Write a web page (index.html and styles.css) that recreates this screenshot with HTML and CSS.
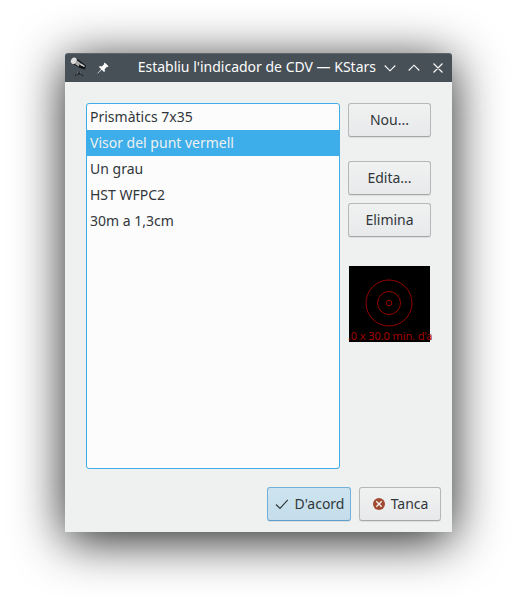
FILE: index.html
```html
<!DOCTYPE html>
<html lang="ca">
<head>
<meta charset="utf-8">
<title>Establiu l'indicador de CDV — KStars</title>
<link rel="stylesheet" href="styles.css">
</head>
<body>
<main class="window">
  <header class="titlebar">
    <svg class="app-icon" width="18" height="20" viewBox="0 0 18 20">
      <path d="M9 13.500 L5.500 18.800 M9 13.500 L12.800 18.800 M6.500 17 H12" stroke="#20262a" stroke-width="1.300" fill="none"/>
      <path d="M8.500 13.500 L6.500 17.500 M9.600 13.500 L11.600 17.500" stroke="#8b9196" stroke-width=".7" fill="none"/>
      <path d="M3.500 1.200 L8 2.500 L16 8.500 L15 12.500 L10 11 L2.500 6.800 Z" fill="#101214"/>
      <path d="M7 3.500 L10.500 6 L8.500 9.500 L5 7 Z" fill="#a9a9a9"/>
      <path d="M10.500 6 L15 9 L14.300 10 L10 8 Z" fill="#cfcfcf"/>
      <ellipse cx="3.800" cy="3.800" rx="2.800" ry="3.400" transform="rotate(28 3.800 3.800)" fill="#dedede"/>
    </svg>
    <svg class="pin" width="12" height="12" viewBox="0 0 12 12">
      <path d="M7.700 .4 L11.600 4.300 L10.600 5 L10 4.700 L7.600 7.200 L8 9.200 L7 10 L4.800 7.800 L.7 11.600 L.4 11.300 L4.200 7.200 L2 5 L2.800 4 L4.800 4.400 L7.300 2 L7 1.300 Z" fill="#fcfcfc"/>
    </svg>
    <h1 class="title">Establiu l'indicador de CDV — KStars</h1>
    <svg class="controls" width="60" height="12" viewBox="0 0 60 12" fill="none" stroke="#fcfcfc" stroke-width="1.100">
      <path d="M.7 3.500 L6 8.800 L11.300 3.500 M24.700 8.500 L30 3.200 L35.300 8.500 M49.500 1.500 L58.500 10.500 M58.500 1.500 L49.500 10.500"/>
    </svg>
  </header>
  <div class="content">
    <ul class="list">
      <li>Prismàtics 7x35</li>
      <li class="selected">Visor del punt vermell</li>
      <li>Un grau</li>
      <li>HST WFPC2</li>
      <li>30m a 1,3cm</li>
    </ul>
    <div class="side">
      <button class="button new">Nou...</button>
      <button class="button">Edita...</button>
      <button class="button">Elimina</button>
      <div class="preview">
        <svg width="83" height="76" viewBox="0 0 83 76">
          <rect x="1" width="81" height="76" fill="#000"/>
          <g fill="none" stroke="#980000">
            <circle cx="41" cy="37" r="23"/>
            <circle cx="41" cy="37" r="11.500"/>
            <circle cx="41" cy="37" r="2.800"/>
          </g>
        </svg>
        <span class="caption">.0 x 30.0 min. d'a</span>
      </div>
    </div>
  </div>
  <footer class="actions">
    <button class="button ok">
      <svg width="14" height="12" viewBox="0 0 14 12"><path d="M1 6.500 L5 10.400 L12.800 1.800" fill="none" stroke="#31363b" stroke-width="1.100"/></svg>
      <span>D'acord</span>
    </button>
    <button class="button close">
      <svg width="12" height="12" viewBox="0 0 12 12"><circle cx="6" cy="6" r="6" fill="#a04a32"/><path d="M3.300 3.300 L8.700 8.700 M8.700 3.300 L3.300 8.700" stroke="#f4efed" stroke-width="1.400"/></svg>
      <span>Tanca</span>
    </button>
  </footer>
</main>
</body>
</html>
```
FILE: styles.css
```css
* { box-sizing: border-box; }
body {
  margin: 0;
  padding: 53px 65px 0;
  height: 609px;
  overflow: hidden;
  background: #fff;
  font: 14px/20px "Noto Sans", sans-serif;
  color: #31363b;
}
.window {
  width: 387px;
  height: 479px;
  background: #eff0f0;
  border-radius: 3px 3px 0 0;
  box-shadow: 0 8px 50px rgba(0, 0, 0, .88);
}
.titlebar {
  display: flex;
  align-items: center;
  height: 29px;
  padding: 0 8px 1px 5px;
  background: #475057;
  border-top: 1px solid #5d666d;
  border-radius: 3px 3px 0 0;
  color: #fcfcfc;
}
.app-icon { margin-top: -1px; }
.pin { margin-left: 9px; }
.title {
  margin: -1px 8px 0 auto;
  font-size: 14px;
  font-weight: 400;
  white-space: nowrap;
}
.content {
  display: flex;
  gap: 8px;
  padding: 21px 21px 0;
}
.list {
  width: 254px;
  height: 366px;
  margin: 0;
  padding: 0;
  list-style: none;
  background: #fcfcfc;
  border: 1px solid #3daee9;
  border-radius: 3px;
}
.list li {
  height: 26px;
  padding: 0 3px;
  line-height: 25px;
}
.list .selected {
  background: #3daee9;
  color: #eff0f1;
}
.side {
  display: flex;
  flex-direction: column;
  gap: 8px;
  width: 83px;
}
.button {
  display: flex;
  align-items: center;
  justify-content: center;
  height: 34px;
  padding: 0 0 1px;
  font: inherit;
  color: #31363b;
  background: linear-gradient(#f0f1f1, #e8e9ea);
  border: 1px solid #b5b7b8;
  border-bottom-color: #a5a7a8;
  border-radius: 3px;
  box-shadow: 0 1px 0 #dcdddd;
}
.new { margin-bottom: 16px; }
.preview {
  position: relative;
  height: 76px;
  margin-top: 21px;
}
.preview svg { display: block; }
.caption {
  position: absolute;
  bottom: -2px;
  left: 0;
  font-size: 11px;
  line-height: 16px;
  letter-spacing: -.1px;
  color: #a00000;
  white-space: nowrap;
}
.actions {
  display: flex;
  justify-content: flex-end;
  gap: 8px;
  padding: 18px 11px 0;
}
.ok {
  width: 84px;
  gap: 6px;
  padding-left: 1px;
  background: linear-gradient(#cde4f0, #c5dcea);
  border-color: #73b0d8;
  border-bottom-color: #5c9fca;
}
.close {
  width: 82px;
  gap: 6px;
  padding-left: 1px;
}
```
